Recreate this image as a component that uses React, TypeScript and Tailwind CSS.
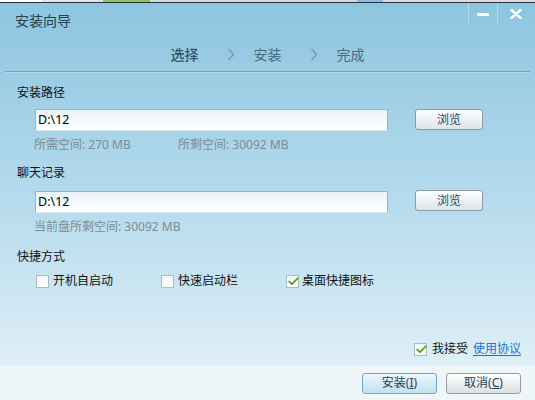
import { Check } from 'lucide-react';

const font = { fontFamily: '"Noto Sans", "Noto Sans CJK SC", sans-serif' };

function CheckBox({ checked }: { checked?: boolean }) {
  return (
    <span className="relative w-[13px] h-[13px] border border-[#a9bcc6] bg-gradient-to-b from-[#f3f6f8] to-white shrink-0">
      {checked && (
        <Check size={13} strokeWidth={3.2} className="absolute left-[0px] top-[-1px] text-[#4f9a12]" />
      )}
    </span>
  );
}

function Chevron() {
  return (
    <svg width="8" height="13" viewBox="0 0 8 13" className="ml-[28px] mr-[19px]">
      <path d="M1.5 1 L6.5 6.5 L1.5 12" fill="none" stroke="#7b9db2" strokeWidth="1.6" />
    </svg>
  );
}

function Browse() {
  return (
    <button className="w-[68px] h-[21px] rounded-[3px] border border-[#8c9ba4] bg-gradient-to-b from-white to-[#dde4e8] text-[12px] text-[#24486f] leading-none">
      浏览
    </button>
  );
}

function PathInput({ value }: { value: string }) {
  return (
    <div className="w-[353px] h-[22px] border border-[#93b6c9] border-b-[#d7e9f2] bg-gradient-to-b from-[#eaf3f8] to-white flex items-center pl-[2px] text-[12.5px] text-black">
      {value}
    </div>
  );
}

export default function App() {
  return (
    <div className="w-[535px] h-[400px] overflow-hidden flex flex-col text-[12px]" style={font}>
      {/* desktop behind the window */}
      <div className="h-[2px] flex bg-[#c9cfd2] shrink-0">
        <div className="w-[42px] bg-white" />
        <div className="w-[61px] bg-[#e4e4e4]" />
        <div className="w-[47px] bg-[#8cc85a]" />
        <div className="w-[207px] bg-[#d6d9db]" />
        <div className="w-[26px] bg-[#8dbbe0]" />
        <div className="flex-1 bg-[#dcdcdc]" />
      </div>
      <div className="h-[1px] bg-[#23323c] shrink-0" />

      <div className="flex-1 flex flex-col bg-gradient-to-b from-[#8dc5df] via-[#b2d9ec] to-[#deeff7]">
        {/* title bar */}
        <div className="h-[34px] flex items-start justify-between shrink-0">
          <div className="h-[34px] flex items-center pl-[15px] text-[14px] text-[#25404f]">安装向导</div>
          <div className="flex h-[21px] mr-[2px]">
            <div className="w-[29px] border-l border-[#b4d9eb] flex items-center justify-center">
              <span className="w-[12px] h-[3px] bg-white rounded-[1px] mt-[2px]" />
            </div>
            <div className="w-[36px] border-l border-[#b4d9eb] flex items-center justify-center">
              <svg width="12" height="10" viewBox="0 0 12 10">
                <path d="M1.5 1 L10.5 9 M10.5 1 L1.5 9" stroke="white" strokeWidth="2.4" strokeLinecap="round" />
              </svg>
            </div>
          </div>
        </div>

        {/* steps */}
        <div className="h-[34px] flex items-center justify-center text-[14px] text-[#4a6a7c] shrink-0">
          <span className="text-[#34536a] font-medium">选择</span>
          <Chevron />
          <span>安装</span>
          <Chevron />
          <span>完成</span>
        </div>
        <div className="mx-[5px] h-[1px] bg-[#6fa6c1] shrink-0" />
        <div className="mx-[5px] h-[1px] bg-[#b3daee] shrink-0" />

        {/* install path */}
        <div className="pl-[17px] mt-[10px] h-[20px] flex items-center text-[#111]">安装路径</div>
        <div className="pl-[35px] mt-[6px] flex items-start gap-[27px]">
          <PathInput value="D:\12" />
          <Browse />
        </div>
        <div className="pl-[34px] mt-[5px] h-[18px] flex items-center text-[#7c8d95]">
          <span className="w-[144px]">所需空间: 270 MB</span>
          <span>所剩空间: 30092 MB</span>
        </div>

        {/* chat records */}
        <div className="pl-[17px] mt-[9px] h-[20px] flex items-center text-[#111]">聊天记录</div>
        <div className="pl-[35px] mt-[8px] flex items-start gap-[27px]">
          <PathInput value="D:\12" />
          <div className="-mt-[1px]"><Browse /></div>
        </div>
        <div className="pl-[34px] mt-[5px] h-[18px] flex items-center text-[#7c8d95]">当前盘所剩空间: 30092 MB</div>

        {/* shortcuts */}
        <div className="pl-[17px] mt-[11px] h-[20px] flex items-center text-[#111]">快捷方式</div>
        <div className="pl-[36px] mt-[5px] h-[18px] flex items-center text-[#111]">
          <div className="w-[125px] flex items-center gap-[4px]"><CheckBox /><span>开机自启动</span></div>
          <div className="w-[125px] flex items-center gap-[4px]"><CheckBox /><span>快速启动栏</span></div>
          <div className="flex items-center gap-[3px]"><CheckBox checked /><span>桌面快捷图标</span></div>
        </div>

        <div className="flex-1" />
        <div className="h-[18px] mb-[8px] pr-[14px] flex items-center justify-end text-[#111]">
          <CheckBox checked />
          <span className="ml-[5px]">我接受</span>
          <a className="ml-[5px] text-[#1d6fd0] underline underline-offset-2">使用协议</a>
        </div>
      </div>

      {/* footer */}
      <div className="h-[34px] bg-[#eef6fa] flex items-center justify-end gap-[9px] pr-[14px] shrink-0">
        <button className="w-[75px] h-[21px] rounded-[3px] border border-[#73a8c6] bg-gradient-to-b from-[#eef7fc] to-[#c0e1f1] text-[12px] text-[#1f3f5b] leading-none">
          安装(<span className="underline">I</span>)
        </button>
        <button className="w-[75px] h-[21px] rounded-[3px] border border-[#939ea4] bg-gradient-to-b from-white to-[#dddfe0] text-[12px] text-[#1f3f5b] leading-none">
          取消(<span className="underline">C</span>)
        </button>
      </div>
    </div>
  );
}
